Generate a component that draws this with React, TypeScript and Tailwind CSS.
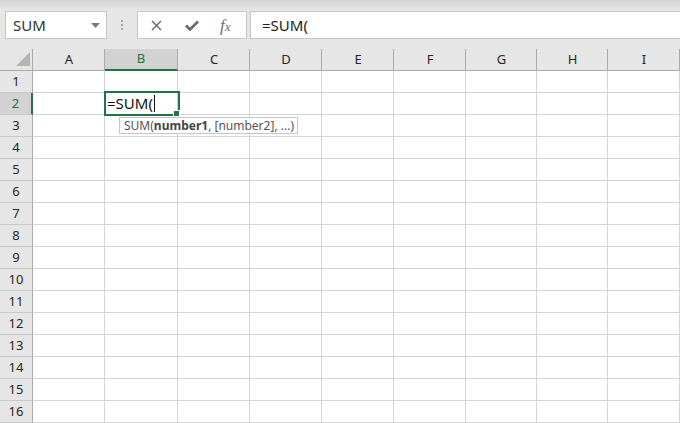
import { Fragment } from 'react';

const COLS = ['A', 'B', 'C', 'D', 'E', 'F', 'G', 'H', 'I'];
const ROWS = Array.from({ length: 16 }, (_, i) => i + 1);
const GRID = 'grid grid-cols-[33px_72px_73px_72px_72px_72px_72px_71px_71px_72px]';

function FormulaBar() {
  return (
    <div className="flex items-start bg-[#e6e6e6] pl-[5px] pt-[1px] h-[39px]">
      {/* Name box */}
      <div className="relative flex items-center w-[102px] h-[28px] bg-white border border-[#c6c6c6] pl-[7px] text-[15px] text-[#333]">
        SUM
        <svg className="absolute right-[6px] top-[11px]" width="9" height="5" viewBox="0 0 9 5">
          <path d="M0 0 L9 0 L4.5 5 Z" fill="#7a7a7a" />
        </svg>
      </div>

      {/* grip dots */}
      <div className="w-[30px] h-[28px] flex flex-col items-center justify-center gap-[2px]">
        <span className="w-[2px] h-[2px] bg-[#a6a6a6]" />
        <span className="w-[2px] h-[2px] bg-[#a6a6a6]" />
        <span className="w-[2px] h-[2px] bg-[#a6a6a6]" />
      </div>

      {/* cancel / enter / fx */}
      <div className="flex items-center h-[28px] w-[110px] bg-white border border-[#c6c6c6] pl-[13px]">
        <svg width="11" height="11" viewBox="0 0 11 11">
          <path d="M1 1 L10 10 M10 1 L1 10" stroke="#6e6e6e" strokeWidth="1.5" />
        </svg>
        <svg className="ml-[23px]" width="14" height="11" viewBox="0 0 14 11">
          <path d="M1 5.5 L5 9.5 L13 1.5" stroke="#6e6e6e" strokeWidth="2.8" fill="none" />
        </svg>
        <span className="ml-[21px] italic text-[#6e6e6e] text-[17px] leading-none font-['Liberation_Serif',serif]">
          f<span className="text-[13px]">x</span>
        </span>
      </div>

      {/* formula input */}
      <div className="flex items-center flex-1 h-[28px] ml-[3px] bg-white border border-[#c6c6c6] border-r-0 pl-[11px] text-[15px] text-[#222]">
        =SUM(
      </div>
    </div>
  );
}

export default function App() {
  return (
    <div className="w-[680px] h-[423px] overflow-hidden bg-white font-['Noto_Sans','Open_Sans',sans-serif]">
      {/* title strip */}
      <div className="h-[10px] bg-gradient-to-b from-[#d4d4d4] to-[#e6e6e6]" />
      <FormulaBar />

      {/* column headers */}
      <div className={`${GRID} h-[22px] bg-[#e6e6e6] text-[13px] text-[#262626]`}>
        <div className="relative border-r border-b border-[#ababab]">
          <svg className="absolute left-[16px] top-[3px]" width="14" height="14" viewBox="0 0 14 14">
            <path d="M14 0 L14 14 L0 14 Z" fill="#b4b4b4" />
          </svg>
        </div>
        {COLS.map((c) =>
          c === 'B' ? (
            <div key={c} className="flex items-center justify-center bg-[#d2d2d2] border-r border-[#ababab] border-b-2 border-b-[#217346] text-[#217346]">
              {c}
            </div>
          ) : (
            <div key={c} className="flex items-center justify-center pl-[1px] border-r border-b border-[#ababab]">
              {c}
            </div>
          ),
        )}
      </div>

      {/* rows */}
      <div className={`${GRID} auto-rows-[22px]`}>
        {ROWS.map((r) => (
          <Fragment key={r}>
            {r === 2 ? (
              <div className="flex items-center justify-center bg-[#d2d2d2] border-b border-[#c8c8c8] border-r-2 border-r-[#217346] text-[13px] text-[#217346]">
                {r}
              </div>
            ) : (
              <div className="flex items-center justify-center bg-[#e6e6e6] border-b border-[#c8c8c8] border-r border-r-[#ababab] text-[13px] text-[#262626]">
                {r}
              </div>
            )}
            {COLS.map((c) =>
              r === 2 && c === 'B' ? (
                <div key={c} className="relative z-10 border-r border-b border-[#d4d4d4]">
                  <div className="absolute -left-[1px] -top-[2px] w-[76px] h-[25px] border-2 border-[#217346] flex items-center pl-[1px] text-[15px] text-[#111]">
                    =SUM(
                    <span className="ml-[1px] w-[1px] h-[17px] bg-[#111]" />
                  </div>
                  <span className="absolute right-[-2px] bottom-[-2px] w-[5px] h-[5px] bg-[#217346] outline outline-1 outline-white" />
                  {/* tooltip */}
                  <div className="absolute left-[14px] top-[24px] w-[179px] h-[17px] flex items-center pl-[4px] bg-white border border-[#c6c6c6] text-[12px] leading-none text-[#555] whitespace-nowrap">
                    SUM(<b className="font-bold text-[#444]">number1</b>, [number2], ...)
                  </div>
                </div>
              ) : (
                <div key={c} className="border-r border-b border-[#d4d4d4]" />
              ),
            )}
          </Fragment>
        ))}
      </div>
    </div>
  );
}
